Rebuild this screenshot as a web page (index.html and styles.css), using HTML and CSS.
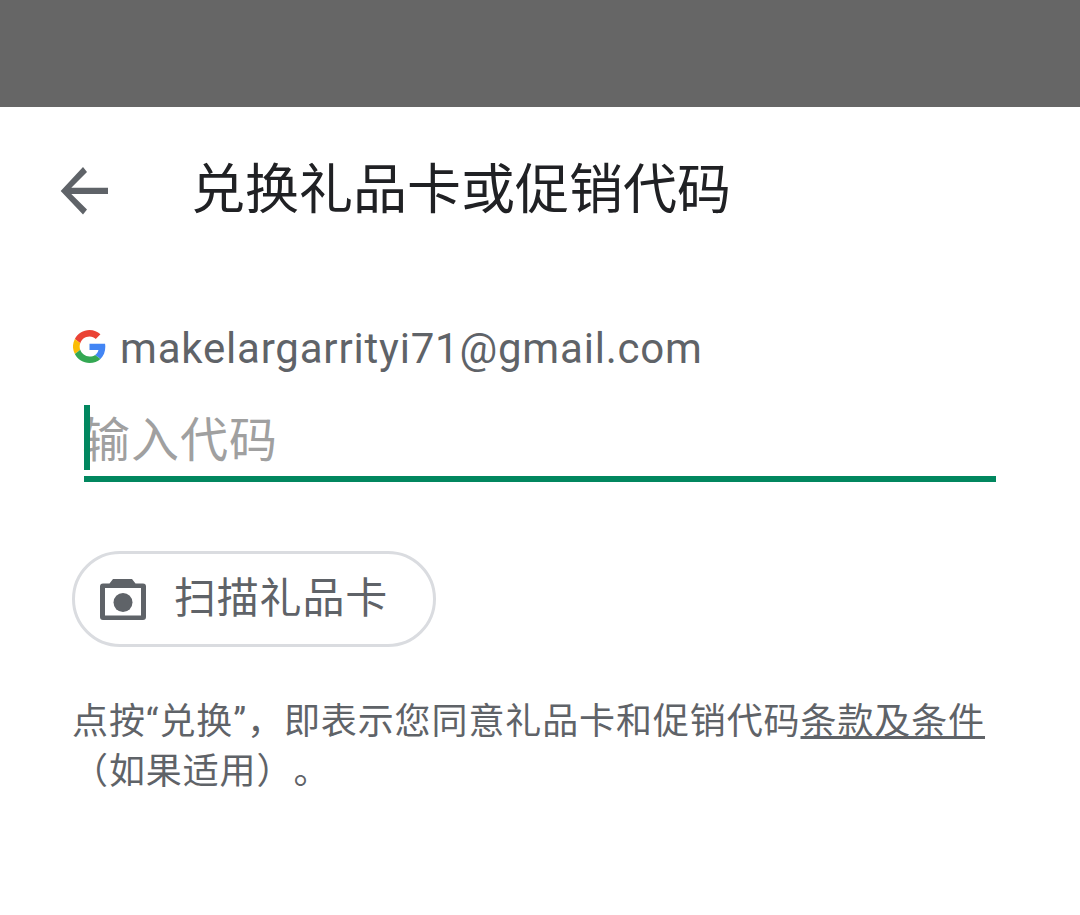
FILE: index.html
```html
<!DOCTYPE html>
<html lang="zh-CN">
<head>
<meta charset="utf-8">
<title>兑换礼品卡或促销代码</title>
<link rel="stylesheet" href="styles.css">
</head>
<body>
<div class="status"></div>
<main class="sheet">
  <header class="bar">
    <svg class="back" viewBox="0 0 48 48" width="48" height="48"><path d="M48 20.700H11.300L27 5 23 0 .7 24 23 47.500 27 42.500 11.300 27H48z" fill="#5f6368"/></svg>
    <h1 class="title">兑换礼品卡或促销代码</h1>
  </header>
  <div class="account">
    <svg class="g" viewBox="0 0 48 48" width="33" height="33">
      <path fill="#ea4335" d="M24 9.500c3.900 0 6.900 1.600 9.100 3.600l6.800-6.800C35.800 2.500 30.400 0 24 0 14.700 0 6.700 5.300 2.700 13.100l7.900 6.100C12.500 13.500 17.800 9.500 24 9.500z"/>
      <path fill="#4285f4" d="M47 24.500c0-1.600-.1-3.100-.4-4.500H24v9h13c-.6 3-2.300 5.500-4.800 7.200l7.700 6C44.400 38 47 31.800 47 24.500z"/>
      <path fill="#fbbc05" d="M10.500 28.800A14.500 14.500 0 0 1 10.500 19.200L2.700 13.100a24 24 0 0 0 0 21.800z"/>
      <path fill="#34a853" d="M24 48c6.500 0 11.900-2.100 15.900-5.800l-7.700-6c-2.100 1.400-4.900 2.300-8.200 2.300-6.200 0-11.500-4-13.400-9.700l-7.900 6.100C6.700 42.700 14.700 48 24 48z"/>
    </svg>
    <span class="email">makelargarrityi71@gmail.com</span>
  </div>
  <div class="field">
    <span class="caret"></span>
    <span class="placeholder">输入代码</span>
  </div>
  <button class="scan" type="button">
    <svg class="cam" viewBox="0 0 46 41" width="46" height="41"><path fill-rule="evenodd" fill="#5f6368" d="M13 0h19l3.500 4.500H43a3 3 0 0 1 3 3V38a3 3 0 0 1-3 3H3a3 3 0 0 1-3-3V7.500a3 3 0 0 1 3-3h6.500zM5 9v27.500h36V9z"/><circle cx="23" cy="23.500" r="9.500" fill="#5f6368"/></svg>
    <span class="scan-text">扫描礼品卡</span>
  </button>
  <p class="terms">点按“兑换”，即表示您同意礼品卡和促销代码<a class="link" href="#">条款及条件</a>（如果适用）。</p>
</main>
</body>
</html>
```
FILE: styles.css
```css
html, body {
  margin: 0;
  height: 100%;
  background: #fff;
}
body {
  font-family: Roboto, "Noto Sans CJK SC", sans-serif;
  overflow: hidden;
  text-spacing-trim: space-all;
}
.status {
  height: 107px;
  background: #666;
}
.sheet {
  padding: 0 84px 0 73px;
}
.bar {
  display: flex;
  align-items: center;
  box-sizing: border-box;
  height: 164px;
  padding-top: 4px;
  margin-left: -13px;
}
.back {
  flex: none;
}
.title {
  margin: 0 0 0 83px;
  font-size: 54px;
  font-weight: 400;
  line-height: 64px;
  color: #202124;
}
.account {
  display: flex;
  align-items: center;
  gap: 14px;
  margin-top: 53px;
  height: 50px;
}
.g {
  flex: none;
  margin-top: -6px;
}
.email {
  font-size: 42px;
  line-height: 50px;
  letter-spacing: 0.8px;
  color: #5f6368;
}
.field {
  display: flex;
  align-items: center;
  position: relative;
  height: 71px;
  margin: 31px 0 0 11px;
  border-bottom: 6px solid #01875f;
}
.caret {
  position: absolute;
  left: 0;
  top: 0;
  width: 6px;
  height: 65px;
  background: #01875f;
}
.placeholder {
  margin-left: -2px;
  font-size: 48px;
  letter-spacing: 1px;
  line-height: 68px;
  color: #a0a0a0;
}
.scan {
  display: flex;
  align-items: center;
  width: 364px;
  height: 96px;
  margin: 69px 0 0 -1px;
  padding: 0 0 0 25px;
  background: #fff;
  border: 3px solid #dadce0;
  border-radius: 48px;
  box-sizing: border-box;
  font-family: inherit;
}
.cam {
  flex: none;
}
.scan-text {
  margin-left: 28px;
  font-size: 42px;
  letter-spacing: 0.8px;
  line-height: 50px;
  color: #5f6368;
}
.terms {
  margin: 50px 0 0 -1px;
  font-size: 36px;
  line-height: 50px;
  letter-spacing: 0.9px;
  color: #5f6368;
}
.link {
  color: #5f6368;
  text-decoration: underline;
}
```
